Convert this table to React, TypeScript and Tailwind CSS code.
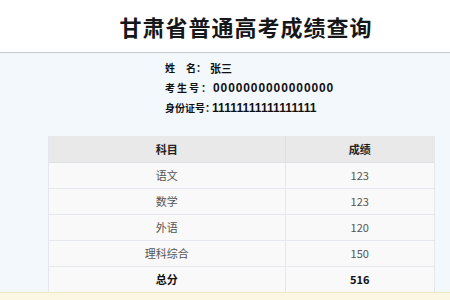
import React from "react";

const rows = [
  { subject: "语文", score: "123" },
  { subject: "数学", score: "123" },
  { subject: "外语", score: "120" },
  { subject: "理科综合", score: "150" },
];

const font = "font-['Noto_Sans_CJK_SC','Microsoft_YaHei',sans-serif]";
const digits = "font-['Liberation_Sans',sans-serif]";

export default function App() {
  return (
    <div className={`w-[450px] h-[300px] overflow-hidden bg-[#f3f8fd] ${font}`}>
      <div className="h-[53px] bg-white border-b border-[#c5c9cd] flex items-center justify-center">
        <h1 className="ml-[42px] text-[22px] font-bold tracking-[1px] text-[#16171a] leading-none">
          甘肃省普通高考成绩查询
        </h1>
      </div>

      <div className="pl-[165px] pt-[5px] text-[10px] font-bold text-[#111] leading-[20px] whitespace-nowrap">
        <div className="flex items-center">
          <span className="w-[45px] flex">
            <span>姓</span>
            <span className="ml-[11px]">名：</span>
          </span>
          <span className="text-[11px]">张三</span>
        </div>
        <div className="flex items-center">
          <span className="w-[48px] tracking-[2px]">考生号：</span>
          <span className={`${digits} text-[12px] tracking-[0.9px]`}>0000000000000000</span>
        </div>
        <div className="flex items-center">
          <span className="w-[47px]">身份证号：</span>
          <span className={`${digits} text-[12px] tracking-[0.1px]`}>11111111111111111</span>
        </div>
      </div>

      <div className="mt-[18px] ml-[48px] w-[387px] border-x border-[#e3e6ea]">
        <table className="w-full border-collapse text-[11px] text-[#555]">
          <thead>
            <tr className="h-[26px] bg-[#e9e9e9]">
              <th className="w-[236px] font-bold text-[#222] border-b border-r border-[#dcdfe3]">科目</th>
              <th className="font-bold text-[#222] border-b border-[#dcdfe3]">成绩</th>
            </tr>
          </thead>
          <tbody>
            {rows.map((r) => (
              <tr key={r.subject} className="h-[26px] bg-[#f9f9f9]">
                <td className="text-center border-b border-r border-[#e4e7eb]">{r.subject}</td>
                <td className="text-center border-b border-[#e4e7eb]">{r.score}</td>
              </tr>
            ))}
            <tr className="h-[26px] bg-[#f9f9f9]">
              <td className="text-center font-bold text-[#111] border-r border-[#e4e7eb]">总分</td>
              <td className="text-center font-bold text-[#111]">516</td>
            </tr>
          </tbody>
        </table>
      </div>

      <div className="h-[10px] bg-[#fcf7e2] border-t border-[#f0e9c8]" />
    </div>
  );
}
